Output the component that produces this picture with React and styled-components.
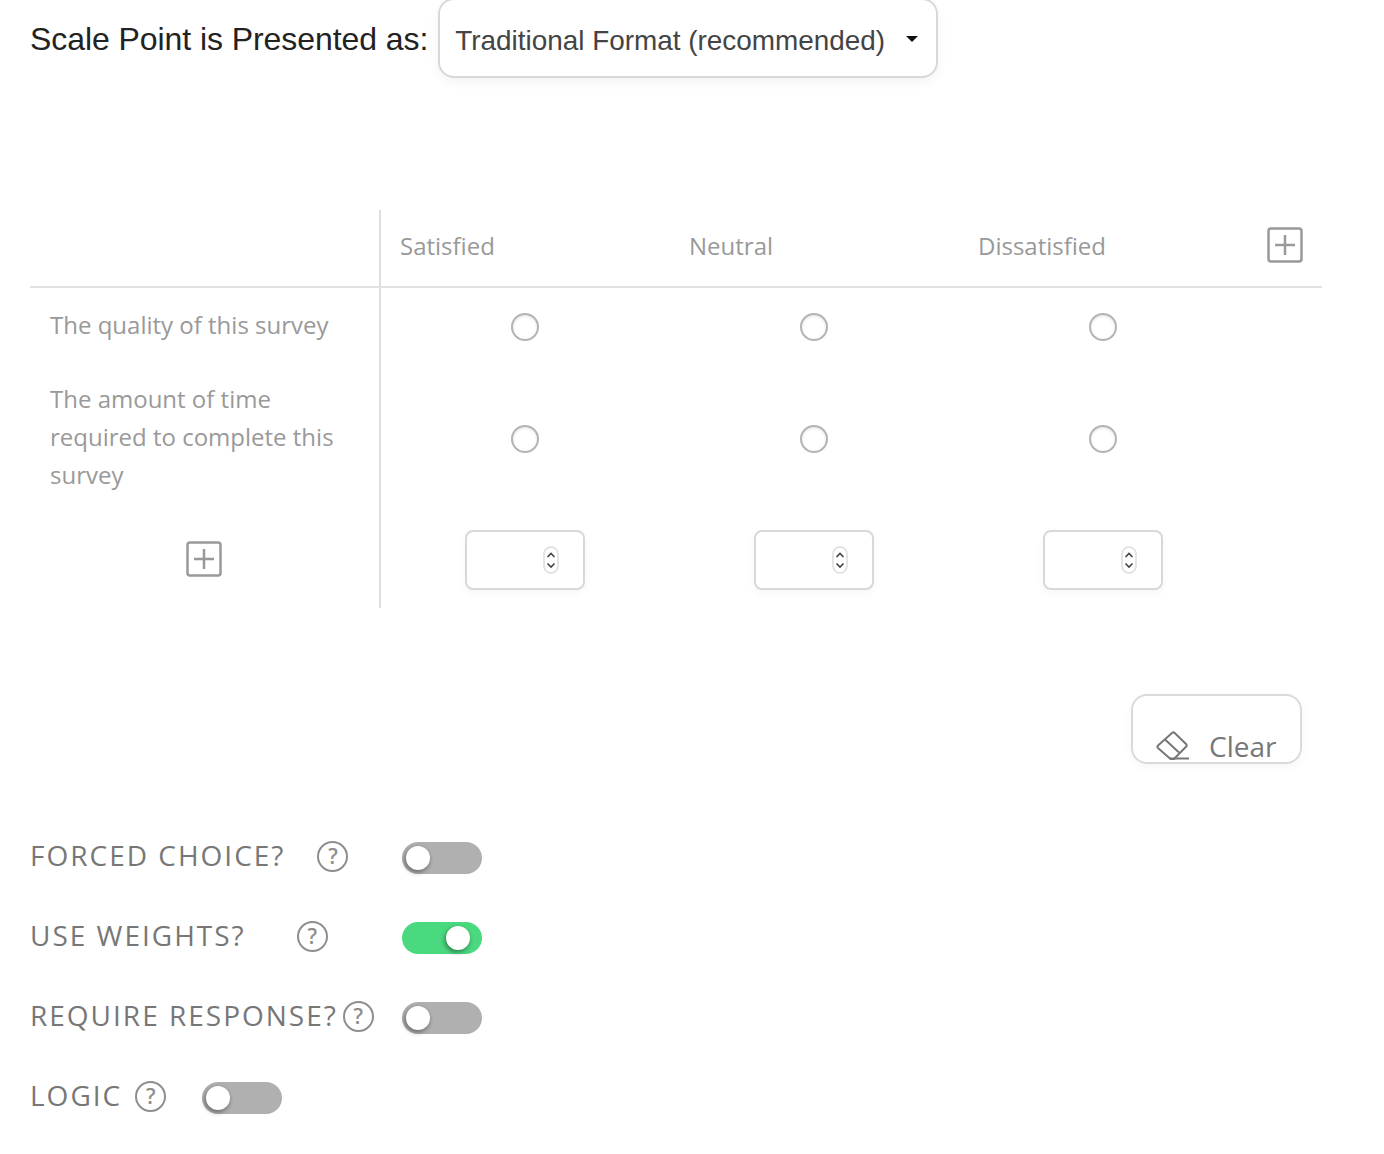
import styled, { createGlobalStyle } from 'styled-components';

const GlobalStyle = createGlobalStyle`
  html, body {
    margin: 0;
    padding: 0;
    background: white;
  }
  body {
    font-family: "Open Sans", "Liberation Sans", sans-serif;
  }
`

const Page = styled.div`
  width: 1384px;
  height: 1154px;
  padding: 0 30px;
  box-sizing: border-box;
  overflow: hidden;
`

const FormatRow = styled.div`
  display: flex;
  align-items: flex-start;
  height: 210px;
`

const FormatLabel = styled.span`
  font-family: "Liberation Sans", Arial, sans-serif;
  font-size: 32px;
  line-height: 78px;
  color: #222;
  letter-spacing: -0.07px;
  white-space: nowrap;
`

const Select = styled.div`
  margin: -2px 0 0 10px;
  width: 500px;
  height: 80px;
  box-sizing: border-box;
  padding: 5px 15px 0;
  display: flex;
  align-items: center;
  justify-content: space-between;
  border: 2px solid #d8d8d8;
  border-radius: 16px;
  box-shadow: 0 4px 12px rgba(0, 0, 0, 0.05);
  font-family: "Liberation Sans", Arial, sans-serif;
  font-size: 27.9px;
  color: #444;
  white-space: nowrap;
`

const Caret = styled.span`
  width: 0;
  height: 0;
  margin: -3px 3px 0 0;
  border-left: 6px solid transparent;
  border-right: 6px solid transparent;
  border-top: 6px solid #111;
`

const Matrix = styled.div`
  width: 1292px;
  display: grid;
  grid-template-columns: 351px 289px 289px 289px 74px;
  grid-template-rows: 78px 77px 148px 95px;
`

const Cell = styled.div`
  display: flex;
  align-items: center;
  justify-content: center;
  box-sizing: border-box;
  padding-bottom: ${(props) => props.$head ? '6px' : '0'};
  border-bottom: ${(props) => props.$head ? '2px solid #e2e2e2' : 'none'};
`

const ControlCell = styled(Cell)`
  padding-right: 1px;
`

const StubCell = styled(Cell)`
  justify-content: ${(props) => props.$center ? 'center' : 'flex-start'};
  padding: ${(props) => props.$center ? '0 2px 4px 0' : '0 30px 0 20px'};
  border-right: 2px solid #dedede;
`

const ColumnTitle = styled(Cell)`
  justify-content: flex-start;
  padding-left: 19px;
  font-size: 24px;
  color: #999;
`

const RowText = styled.span`
  margin-top: -4px;
  font-size: 24px;
  line-height: 38px;
  color: #999;
`

const Radio = styled.span`
  width: 28px;
  height: 28px;
  box-sizing: border-box;
  border: 2px solid #b4b4b4;
  border-radius: 50%;
  box-shadow: inset 0 1px 3px rgba(0, 0, 0, 0.12);
`

const PlusButton = styled.svg`
  width: 36px;
  height: 36px;
  display: block;
`

const WeightInput = styled.div`
  width: 120px;
  height: 60px;
  margin-bottom: 1px;
  box-sizing: border-box;
  padding-right: 24px;
  display: flex;
  align-items: center;
  justify-content: flex-end;
  border: 2px solid #d8d8d8;
  border-radius: 8px;
  box-shadow: 0 3px 8px rgba(0, 0, 0, 0.04);
`

const Spinner = styled.svg`
  width: 16px;
  height: 28px;
  display: block;
`

const ClearRow = styled.div`
  display: flex;
  justify-content: flex-end;
  padding: 86px 52px 0 0;
`

const ClearButton = styled.div`
  width: 171px;
  height: 70px;
  box-sizing: border-box;
  padding: 31px 0 0 23px;
  display: flex;
  align-items: flex-start;
  gap: 19px;
  overflow: hidden;
  border: 2px solid #dadada;
  border-radius: 16px;
  box-shadow: 0 3px 8px rgba(0, 0, 0, 0.04);
  font-size: 28px;
  line-height: 38px;
  color: #777;
`

const EraserIcon = styled.svg`
  width: 34px;
  height: 30px;
  flex: none;
  margin-top: 3px;
`

const Options = styled.div`
  display: flex;
  flex-direction: column;
  gap: 48px;
  padding-top: 78px;
`

const OptionRow = styled.div`
  display: flex;
  align-items: center;
  height: 32px;
`

const OptionLabel = styled.div`
  width: ${(props) => props.$width}px;
  flex: none;
  display: flex;
  align-items: center;
  margin-top: -7px;
`

const OptionText = styled.span`
  font-size: 28px;
  letter-spacing: 2px;
  color: #777;
  white-space: nowrap;
`

const HelpIcon = styled.span`
  width: 31px;
  height: 31px;
  flex: none;
  box-sizing: border-box;
  margin: 3px 0 0 ${(props) => props.$gap}px;
  display: flex;
  align-items: center;
  justify-content: center;
  border: 2px solid #8e8e8e;
  border-radius: 50%;
  font-size: 21px;
  font-weight: 600;
  line-height: 1;
  color: #8e8e8e;
`

const Toggle = styled.div`
  width: 80px;
  height: 32px;
  box-sizing: border-box;
  padding: 4px;
  display: flex;
  justify-content: ${(props) => props.$on ? 'flex-end' : 'flex-start'};
  border-radius: 16px;
  background: ${(props) => props.$on ? '#4bd97f' : '#b0b0b0'};
  padding-right: ${(props) => props.$on ? '12px' : '4px'};
`

const Knob = styled.span`
  width: 24px;
  height: 24px;
  border-radius: 50%;
  background: white;
  box-shadow: -1px 2px 5px rgba(0, 0, 0, 0.45);
`

const columns = ['Satisfied', 'Neutral', 'Dissatisfied']
const rows = [
  'The quality of this survey',
  'The amount of time required to complete this survey',
]
const options = [
  {label: 'FORCED CHOICE?', gap: 32, width: 372},
  {label: 'USE WEIGHTS?', gap: 51, width: 372, on: true},
  {label: 'REQUIRE RESPONSE?', gap: 5, width: 372},
  {label: 'LOGIC', gap: 13, width: 172},
]

function Plus() {
  return (
    <PlusButton viewBox="0 0 36 36" fill="none" stroke="#999" strokeWidth="2.5">
      <rect x="1.5" y="1.5" width="33" height="33" rx="2.5"/>
      <path d="M18 8v20M8 18h20"/>
    </PlusButton>
  )
}

function App() {
  return (
    <Page>
      <GlobalStyle/>
      <FormatRow>
        <FormatLabel>Scale Point is Presented as:</FormatLabel>
        <Select>
          Traditional Format (recommended)
          <Caret/>
        </Select>
      </FormatRow>

      <Matrix>
        <StubCell $head/>
        {columns.map((c) => <ColumnTitle $head key={c}>{c}</ColumnTitle>)}
        <Cell $head><Plus/></Cell>

        {rows.map((r) => [
          <StubCell key={r}><RowText>{r}</RowText></StubCell>,
          ...columns.map((c) => <ControlCell key={r + c}><Radio/></ControlCell>),
          <Cell key={r + 'end'}/>,
        ])}

        <StubCell $center><Plus/></StubCell>
        {columns.map((c) => (
          <ControlCell key={c}>
            <WeightInput>
              <Spinner viewBox="0 0 16 28" fill="none">
                <rect x="1" y="1" width="14" height="26" rx="7" stroke="#ddd" strokeWidth="1.5"/>
                <path d="M4.500 11 8 7.500l3.500 3.500M4.500 17.500 8 21l3.500-3.500" stroke="#444" strokeWidth="1.6"/>
              </Spinner>
            </WeightInput>
          </ControlCell>
        ))}
        <Cell/>
      </Matrix>

      <ClearRow>
        <ClearButton>
          <EraserIcon viewBox="0 0 34 30" fill="none" stroke="#777" strokeWidth="2">
            <path d="M2 15.500 16 3a2 2 0 0 1 2.700 0L30 14a2 2 0 0 1 0 2.800L18 29h-3.500L2 18a1.800 1.800 0 0 1 0-2.500Z"/>
            <path d="M9 9.500 23 22.500"/>
            <path d="M14 28.500h19"/>
          </EraserIcon>
          Clear
        </ClearButton>
      </ClearRow>

      <Options>
        {options.map((o) => (
          <OptionRow key={o.label}>
            <OptionLabel $width={o.width}>
              <OptionText>{o.label}</OptionText>
              <HelpIcon $gap={o.gap}>?</HelpIcon>
            </OptionLabel>
            <Toggle $on={o.on}><Knob/></Toggle>
          </OptionRow>
        ))}
      </Options>
    </Page>
  )
}

export default App
